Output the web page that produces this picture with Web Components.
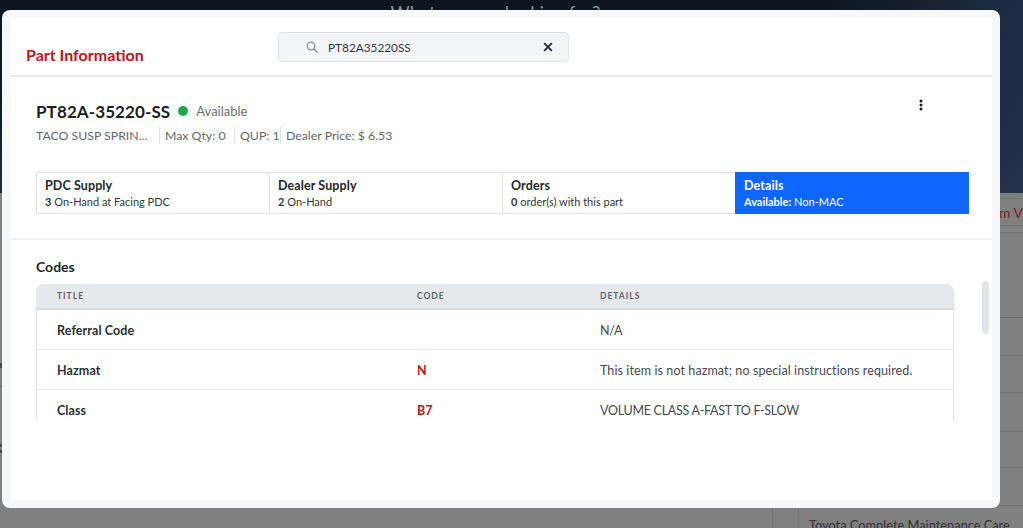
<!DOCTYPE html>
<html>
<head>
<meta charset="utf-8">
<title>Part Information</title>
<style>
  html, body { margin: 0; height: 100%; overflow: hidden; background: #808080; font-family: Lato, "Open Sans", sans-serif; }
</style>
</head>
<body>
<page-behind></page-behind>
<part-modal>
  <search-box slot="search" value="PT82A35220SS"></search-box>
  <part-summary slot="summary" number="PT82A-35220-SS" status="Available">
    <span>TACO SUSP SPRIN...</span>
    <span>Max Qty: 0</span>
    <span>QUP: 1</span>
    <span>Dealer Price: $ 6.53</span>
  </part-summary>
  <stat-tabs slot="tabs">
    <stat-tab label="PDC Supply"><b>3</b> On-Hand at Facing PDC</stat-tab>
    <stat-tab label="Dealer Supply"><b>2</b> On-Hand</stat-tab>
    <stat-tab label="Orders"><b>0</b> order(s) with this part</stat-tab>
    <stat-tab label="Details" active><b>Available:</b> Non-MAC</stat-tab>
  </stat-tabs>
  <codes-table slot="codes"></codes-table>
</part-modal>

<script>
class PageBehind extends HTMLElement {
  constructor() {
    super()
    this.attachShadow({ mode: 'open' }).innerHTML = `
      <style>
        :host { display: block; height: 528px; overflow: hidden; background: #808080; color: #333; }
        .hero {
          height: 193px;
          box-sizing: border-box;
          padding: 3px 32px 0 0;
          text-align: center;
          font-size: 18.5px;
          line-height: 20px;
          color: #8a9097;
          background:
            linear-gradient(90deg, rgba(14,23,32,0) 80%, rgba(38,52,80,.75) 100%),
            linear-gradient(180deg, #0c151d 0%, #111b26 50%, #1f2a3c 100%);
        }
        .below { display: grid; grid-template-columns: 773px 26px minmax(0, 1fr); height: 335px; }
        .left {
          border-right: 1px solid #737373;
          background:
            linear-gradient(#4a4a4a, #4a4a4a) 0 170px / 2px 5px no-repeat,
            linear-gradient(#6a6a6a, #6a6a6a) 0 193px / 2px 1px no-repeat,
            linear-gradient(#4a4a4a, #4a4a4a) 0 251px / 2px 3px no-repeat,
            linear-gradient(#4a4a4a, #4a4a4a) 0 257px / 2px 3px no-repeat;
        }
        .mid { border-right: 1px solid #737373; }
        .rows { display: flex; flex-direction: column; min-width: 0; }
        .rows div { box-sizing: border-box; border-bottom: 1px solid #737373; padding-left: 10px; white-space: nowrap; overflow: hidden; }
        .rows .red { color: #7d2320; font-size: 14px; line-height: 27px; text-align: right; padding: 0; }
        .rows .care { font-size: 12.8px; line-height: 20px; padding-top: 9px; border: 0; }
      </style>
      <div class="hero">What are you looking for?</div>
      <div class="below">
        <div class="left"></div>
        <div class="mid"></div>
        <div class="rows">
          <div style="height:6px"></div>
          <div class="red" style="height:27px">Shop From V</div>
          <div style="height:7px"></div>
          <div style="height:85px"></div>
          <div style="height:38px"></div>
          <div style="height:37px"></div>
          <div style="height:39px"></div>
          <div style="height:36px"></div>
          <div style="height:38px"></div>
          <div class="care">Toyota Complete Maintenance Care</div>
        </div>
      </div>`
  }
}

class PartModal extends HTMLElement {
  constructor() {
    super()
    this.attachShadow({ mode: 'open' }).innerHTML = `
      <style>
        :host {
          position: fixed;
          left: 2px;
          top: 10px;
          width: 998px;
          height: 498px;
          box-sizing: border-box;
          padding: 7px 8px 8px 9px;
          background: #f7f8fa;
          border-radius: 8px;
          color: #23262a;
        }
        .inner { height: 100%; background: #fff; display: flex; flex-direction: column; }
        header {
          height: 60px;
          box-sizing: border-box;
          flex: none;
          display: flex;
          border-bottom: 2px solid #e8e9eb;
        }
        h1 { margin: 0; padding: 27px 0 0 15px; width: 267px; box-sizing: border-box; font-size: 16px; line-height: 21px; font-weight: 700; color: #c4111b; }
        .top { flex: none; height: 163px; box-sizing: border-box; padding: 0 23px 0 25px; border-bottom: 2px solid #f0f1f2; }
        .body { flex: 1; min-height: 0; position: relative; padding: 17px 0 0 25px; }
        h2 { margin: 0 0 8px; font-size: 14px; line-height: 19px; font-weight: 700; color: #23262a; }
        .scroller { height: 137px; overflow: hidden; width: 918px; }
        .thumb { position: absolute; left: 971px; top: 41px; width: 7px; height: 53px; border-radius: 4px; background: #e4e5e8; }
      </style>
      <div class="inner">
        <header>
          <h1>Part Information</h1>
          <slot name="search"></slot>
        </header>
        <div class="top">
          <slot name="summary"></slot>
          <slot name="tabs"></slot>
        </div>
        <div class="body">
          <h2>Codes</h2>
          <div class="scroller"><slot name="codes"></slot></div>
          <div class="thumb"></div>
        </div>
      </div>`
  }
}

class SearchBox extends HTMLElement {
  constructor() {
    super()
    const value = this.getAttribute('value')
    this.attachShadow({ mode: 'open' }).innerHTML = `
      <style>
        :host {
          display: flex;
          align-items: center;
          width: 291px;
          height: 30px;
          margin-top: 15px;
          box-sizing: border-box;
          padding: 0 15px 0 27px;
          background: #f4f5f7;
          border: 1px solid #e2e4e7;
          border-radius: 4px;
          font-size: 11.8px;
          color: #33363a;
        }
        svg { flex: none; display: block; }
        .text { flex: 1; padding-left: 10px; }
      </style>
      <svg width="12" height="12" viewBox="0 0 12 12" fill="none" stroke="#8c8f94" stroke-width="1.3">
        <circle cx="5" cy="5" r="3.8"/><path d="M8 8l3.2 3.2" stroke-linecap="round"/>
      </svg>
      <span class="text">${value}</span>
      <svg width="10" height="10" viewBox="0 0 10 10" fill="none" stroke="#26282b" stroke-width="1.9">
        <path d="M1.2 1.2l7.6 7.6M8.8 1.2l-7.6 7.6"/>
      </svg>`
  }
}

class PartSummary extends HTMLElement {
  constructor() {
    super()
    this.attachShadow({ mode: 'open' }).innerHTML = `
      <style>
        :host { display: block; position: relative; height: 95px; box-sizing: border-box; padding-top: 22px; }
        .title { display: flex; align-items: center; height: 24px; }
        .num { font-size: 17px; font-weight: 700; letter-spacing: .1px; color: #1d2024; }
        .dot { width: 10px; height: 10px; border-radius: 50%; background: #1fa84a; margin: 0 8px; }
        .status { font-size: 13px; color: #6c7075; }
        .meta { display: flex; align-items: center; margin-top: 4px; font-size: 12.3px; line-height: 16px; color: #63676c; white-space: nowrap; }
        ::slotted(span) { padding: 0 5px; border-left: 1px solid #e3e4e6; line-height: 17px; box-sizing: border-box; }
        ::slotted(span:first-child) { padding-left: 0; border-left: 0; width: 123px; }
        ::slotted(span:nth-child(2)) { width: 75px; }
        ::slotted(span:nth-child(3)) { width: 46px; padding-right: 0; }
        .more { position: absolute; left: 883px; top: 22px; display: block; }
      </style>
      <div class="title">
        <span class="num">${this.getAttribute('number')}</span>
        <span class="dot"></span>
        <span class="status">${this.getAttribute('status')}</span>
      </div>
      <div class="meta"><slot></slot></div>
      <svg class="more" width="4" height="12" viewBox="0 0 4 12" fill="#1d1f22">
        <circle cx="2" cy="2" r="1.5"/><circle cx="2" cy="6" r="1.5"/><circle cx="2" cy="10" r="1.5"/>
      </svg>`
  }
}

class StatTabs extends HTMLElement {
  constructor() {
    super()
    this.attachShadow({ mode: 'open' }).innerHTML = `
      <style>
        :host { display: grid; grid-template-columns: 232px 233px 233px 1fr; height: 42px; width: 933px; box-sizing: border-box; border: 1px solid #e2e3e5; }
      </style>
      <slot></slot>`
  }
}

class StatTab extends HTMLElement {
  constructor() {
    super()
    this.attachShadow({ mode: 'open' }).innerHTML = `
      <style>
        :host { display: block; box-sizing: border-box; padding: 4px 8px 0; border-left: 1px solid #e2e3e5; color: #33363a; font-size: 11px; line-height: 15px; }
        :host(:first-child) { border-left: 0; }
        :host([active]) { background: #0d67ff; color: #fff; border-left: 0; margin: -1px -1px -1px 0; padding: 5px 9px 0; }
        .label { font-size: 12.5px; font-weight: 700; line-height: 17px; letter-spacing: .1px; color: #23262a; }
        :host([active]) .label { color: #fff; }
      </style>
      <div class="label">${this.getAttribute('label')}</div>
      <div><slot></slot></div>`
  }
}

const CODE_ROWS = [
  ['Referral Code', '', 'N/A'],
  ['Hazmat', 'N', 'This item is not hazmat; no special instructions required.'],
  ['Class', 'B7', 'VOLUME CLASS A-FAST TO F-SLOW']
]

class CodesTable extends HTMLElement {
  constructor() {
    super()
    const rows = CODE_ROWS.map(r => `
      <div class="row">
        <span class="title">${r[0]}</span>
        <span class="code">${r[1]}</span>
        <span class="details${r[2] === r[2].toUpperCase() ? ' caps' : ''}">${r[2]}</span>
      </div>`).join('')
    this.attachShadow({ mode: 'open' }).innerHTML = `
      <style>
        :host { display: block; box-sizing: border-box; border: solid #e3e4e7; border-width: 0 1px; border-radius: 8px 8px 0 0; font-size: 12.5px; }
        .row, .head { display: grid; grid-template-columns: 360px 183px 1fr; padding-left: 20px; align-items: center; }
        .head {
          height: 26px;
          margin: 0 -1px;
          padding-left: 21px;
          background: #e7e8eb;
          border-bottom: 2px solid #d8dadd;
          border-radius: 8px 8px 0 0;
          box-sizing: border-box;
          font-size: 8.5px;
          font-weight: 700;
          letter-spacing: 1px;
          color: #5d6166;
        }
        .row { height: 40px; box-sizing: border-box; padding-top: 2px; border-bottom: 1px solid #e3e4e7; }
        .title { font-weight: 700; color: #2b2e32; letter-spacing: .1px; }
        .code { font-weight: 700; color: #c4111b; }
        .details { color: #45484d; letter-spacing: .1px; }
        .caps { letter-spacing: -.28px; }
      </style>
      <div class="head"><span>TITLE</span><span>CODE</span><span>DETAILS</span></div>
      ${rows}`
  }
}

customElements.define('page-behind', PageBehind)
customElements.define('part-modal', PartModal)
customElements.define('search-box', SearchBox)
customElements.define('part-summary', PartSummary)
customElements.define('stat-tabs', StatTabs)
customElements.define('stat-tab', StatTab)
customElements.define('codes-table', CodesTable)
</script>
</body>
</html>
